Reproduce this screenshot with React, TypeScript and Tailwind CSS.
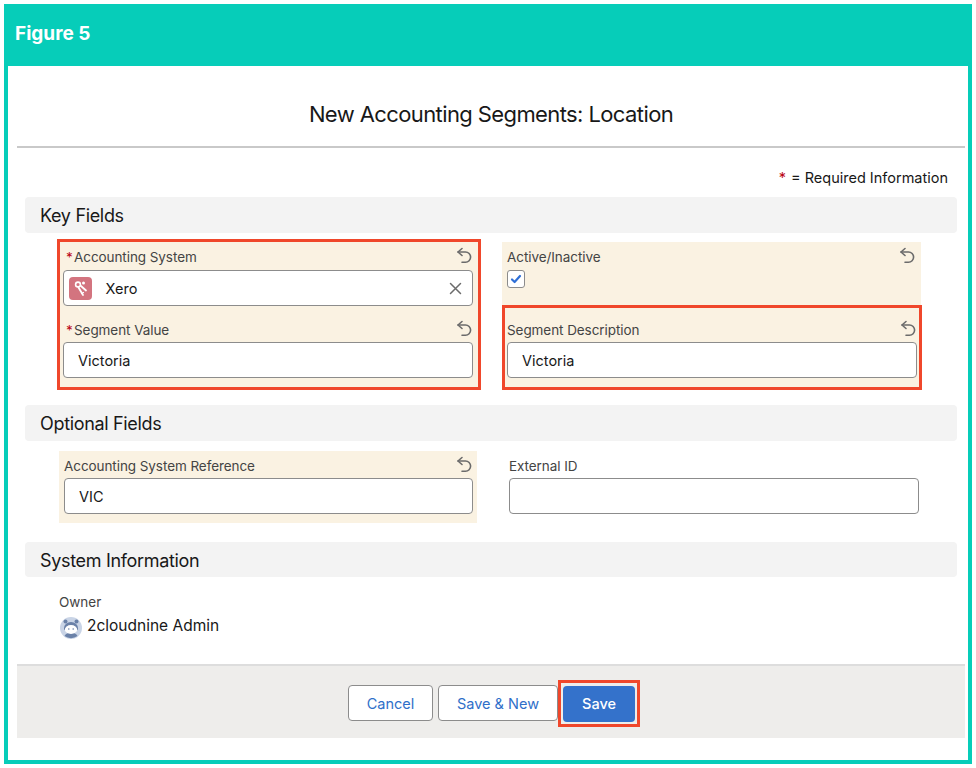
import React from "react";

function Undo() {
  return (
    <svg width="16" height="17" viewBox="0 0 16 17" fill="none" stroke="#6b6b6b" strokeWidth="1.6" strokeLinecap="round" strokeLinejoin="round">
      <path d="M6 1.5 2 5l4 3.5" />
      <path d="M2 5h7.5a5 5 0 0 1 0 10.2H6" />
    </svg>
  );
}

function FieldHead({ label, required, icon = true }: { label: string; required?: boolean; icon?: boolean }) {
  return (
    <div className="flex h-[28px] justify-between pt-[5px]">
      <div className="flex h-[20px] items-center text-[13.5px] leading-[20px] tracking-[-0.07px] text-[#444444]">
        {required && <span className="ml-[3px] mr-[3px] w-[5px] text-[#ba0517]">*</span>}
        <span>{label}</span>
      </div>
      {icon && <div className="mr-[1px]"><Undo /></div>}
    </div>
  );
}

function TextBox({ value }: { value?: string }) {
  return (
    <div className="flex h-[36px] items-center rounded-[4px] border border-[#8c8c8c] bg-white pl-[14px] pt-[1px] text-[14.5px] text-[#181818]">
      {value}
    </div>
  );
}

function SectionBar({ title, short }: { title: string; short?: boolean }) {
  return (
    <div className={short ? "mx-[8px] flex h-[35px] items-center rounded-[4px] bg-[#f3f3f3] pl-[15px] pt-[1px] text-[18px] tracking-[-0.33px] text-[#181818]" : "mx-[8px] flex h-[36px] items-center rounded-[4px] bg-[#f3f3f3] pl-[15px] pt-[1px] text-[18px] tracking-[-0.33px] text-[#181818]"}>
      {title}
    </div>
  );
}

function KeyBadge() {
  return (
    <div className="flex h-[23px] w-[23px] items-center justify-center rounded-[4px] bg-[#d3747f]">
      <svg width="23" height="23" viewBox="0 0 23 23" fill="none" stroke="#ffffff" strokeLinecap="round">
        <circle cx="9" cy="7.5" r="2.4" strokeWidth="1.6" />
        <path d="M9.5 10.5 14 18" strokeWidth="1.8" />
        <path d="M12 9 17 13.5" strokeWidth="1.8" />
        <circle cx="14.5" cy="6" r="1.5" fill="#ffffff" stroke="none" />
        <path d="M12.5 16.5l2-1" strokeWidth="1.2" />
      </svg>
    </div>
  );
}

function Avatar() {
  return (
    <svg width="22" height="22" viewBox="0 0 22 22" className="shrink-0">
      <circle cx="11" cy="11" r="11" fill="#c9d4e6" />
      <circle cx="5.5" cy="4.5" r="2" fill="#6a81a8" />
      <circle cx="16.5" cy="4.5" r="2" fill="#6a81a8" />
      <path d="M4 11a7 6 0 0 1 14 0v2H4z" fill="#6a81a8" />
      <path d="M4.5 19a7 5 0 0 1 13 0a11 11 0 0 1-13 0z" fill="#6a81a8" />
      <ellipse cx="11" cy="12.5" rx="6.2" ry="4.4" fill="#ffffff" />
      <circle cx="8.8" cy="12" r="0.8" fill="#6a81a8" />
      <circle cx="13.2" cy="12" r="0.8" fill="#6a81a8" />
    </svg>
  );
}

export default function App() {
  return (
    <div className="h-[768px] w-[976px] bg-white p-[4px] font-['Inter','Liberation_Sans',sans-serif]">
      <div className="flex h-[760px] w-[968px] flex-col">
        <div className="flex h-[62px] shrink-0 items-center bg-[#06cdb9] pb-[2px] pl-[11px] text-[19px] font-bold text-white">
          Figure 5
        </div>
        <div className="flex flex-1 flex-col border-x-4 border-b-4 border-[#06cdb9] pl-[9px] pr-[3px]">
          <div className="flex h-[82px] shrink-0 items-center justify-center border-b-2 border-[#c9c9c9] pt-[16px] text-[22px] tracking-[-0.6px] text-[#181818]">
            New Accounting Segments: Location
          </div>
          <div className="flex h-[49px] shrink-0 items-start justify-end pr-[17px] pt-[20px] text-[14.5px] leading-[20px] text-[#181818]">
            <span className="mr-[5px] text-[#ba0517]">*</span>= Required Information
          </div>

          <SectionBar title="Key Fields" />
          <div className="mt-[6px] flex pl-[40px]">
            <div className="w-[424px] border-[3px] border-[#f0472b] bg-[#faf2e2] pb-[9px] pl-[3px] pr-[5px]">
              <FieldHead label="Accounting System" required />
              <div className="flex h-[36px] items-center rounded-[4px] border border-[#8c8c8c] bg-white pl-[4.5px] pr-[10px] text-[14.5px] text-[#181818]">
                <KeyBadge />
                <span className="ml-[14px] flex-1 pt-[1px]">Xero</span>
                <svg width="13" height="13" viewBox="0 0 13 13" stroke="#6b6b6b" strokeWidth="1.5" strokeLinecap="round">
                  <path d="M1.5 1.5l10 10M11.5 1.5l-10 10" />
                </svg>
              </div>
              <div className="mt-[8px]">
                <div className="h-[28px] pt-[1px]">
                  <FieldHead label="Segment Value" required />
                </div>
                <TextBox value="Victoria" />
              </div>
            </div>
            <div className="ml-[21px] w-[420px] pt-[3px]">
              <div className="mr-[1px] h-[63px] bg-[#faf2e2] pl-[5px] pr-[5px]">
                <FieldHead label="Active/Inactive" />
                <div className="flex h-[18px] w-[18px] items-center justify-center rounded-[3px] border border-[#8c8c8c] bg-white">
                  <svg width="12" height="10" viewBox="0 0 12 10" fill="none" stroke="#2f6fd6" strokeWidth="2.2" strokeLinecap="round" strokeLinejoin="round">
                    <path d="M2 5.5 4.6 8 10 2" />
                  </svg>
                </div>
              </div>
              <div className="h-[85px] border-[3px] border-[#f0472b] bg-[#faf2e2] pl-[2px] pr-[2.5px] pt-[6px]">
                <div className="h-[28px] pt-[1px]">
                  <FieldHead label="Segment Description" />
                </div>
                <TextBox value="Victoria" />
              </div>
            </div>
          </div>

          <div className="mt-[15px]">
            <SectionBar title="Optional Fields" />
          </div>
          <div className="mt-[10px] flex pl-[42px]">
            <div className="h-[72px] w-[418px] bg-[#faf2e2] pl-[5px] pr-[4px]">
              <div className="h-[27px]">
                <FieldHead label="Accounting System Reference" />
              </div>
              <TextBox value="VIC" />
            </div>
            <div className="ml-[32px] w-[410px]">
              <FieldHead label="External ID" icon={false} />
              <div className="-mt-[1px]">
                <TextBox />
              </div>
            </div>
          </div>

          <div className="mt-[19px]">
            <SectionBar title="System Information" short />
          </div>
          <div className="pl-[42px] pt-[15px]">
            <div className="h-[20px] text-[13.5px] leading-[20px] text-[#444444]">Owner</div>
            <div className="mt-[5px] flex items-center">
              <div className="ml-[1px]"><Avatar /></div>
              <span className="-mt-[4px] ml-[5px] text-[15.5px] text-[#181818]">2cloudnine Admin</span>
            </div>
          </div>

          <div className="mb-[22px] mt-auto flex h-[74px] items-start justify-center border-t-2 border-[#dddddd] bg-[#eeedeb] pl-[6px] pt-[19px]">
            <button className="flex h-[36px] w-[85px] items-center justify-center rounded-[4px] border border-[#8c8c8c] bg-white pt-[1px] text-[14.5px] text-[#2f6fc9]">Cancel</button>
            <button className="ml-[5px] flex h-[36px] w-[120px] items-center justify-center rounded-[4px] border border-[#8c8c8c] bg-white pt-[1px] text-[14.5px] text-[#2f6fc9]">Save &amp; New</button>
            <div className="-mt-[5px] flex h-[47px] w-[82px] items-center justify-center border-[3px] border-[#f0472b]">
              <button className="flex h-[36px] w-[72px] items-center justify-center rounded-[4px] bg-[#3472cb] text-[14.5px] font-medium text-white">Save</button>
            </div>
          </div>
        </div>
      </div>
    </div>
  );
}
